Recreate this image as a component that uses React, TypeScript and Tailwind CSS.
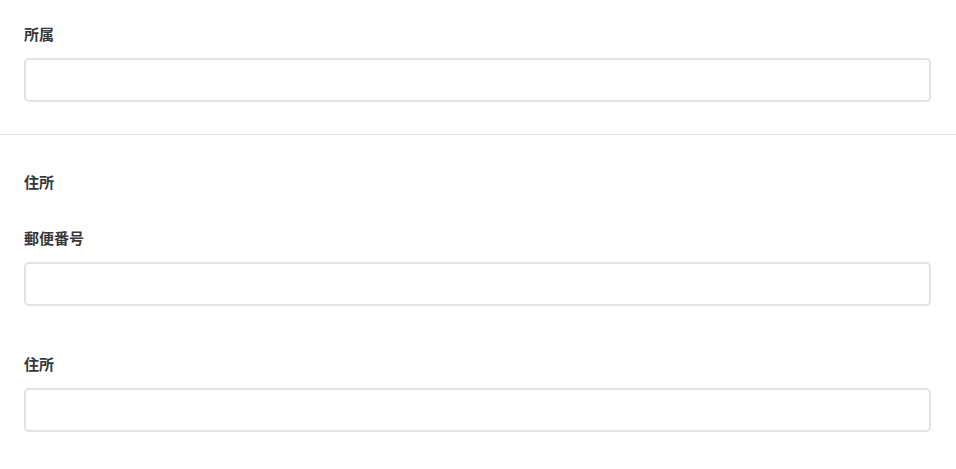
import React from "react";

const font = { fontFamily: '"Noto Sans CJK JP", "Noto Sans", sans-serif' };

function Label({ children }: { children: React.ReactNode }) {
  return (
    <div className="text-[15px] leading-[20px] font-bold text-[#383838]">{children}</div>
  );
}

function Input() {
  return (
    <input
      type="text"
      className="block w-full h-[44px] rounded-[5px] border-2 border-[#e2e2e2] bg-white outline-none"
    />
  );
}

export default function App() {
  return (
    <div className="w-[956px] h-[469px] bg-white overflow-hidden" style={font}>
      <div className="pl-[24px] pr-[25px] pt-[24px] pb-[32px]">
        <Label>所属</Label>
        <div className="mt-[14px]">
          <Input />
        </div>
      </div>
      <div className="h-px bg-[#e0e0e0]" />
      <div className="pl-[24px] pr-[25px] pt-[37px]">
        <Label>住所</Label>
        <div className="mt-[36px]">
          <Label>郵便番号</Label>
          <div className="mt-[14px]">
            <Input />
          </div>
        </div>
        <div className="mt-[48px]">
          <Label>住所</Label>
          <div className="mt-[14px]">
            <Input />
          </div>
        </div>
      </div>
    </div>
  );
}
